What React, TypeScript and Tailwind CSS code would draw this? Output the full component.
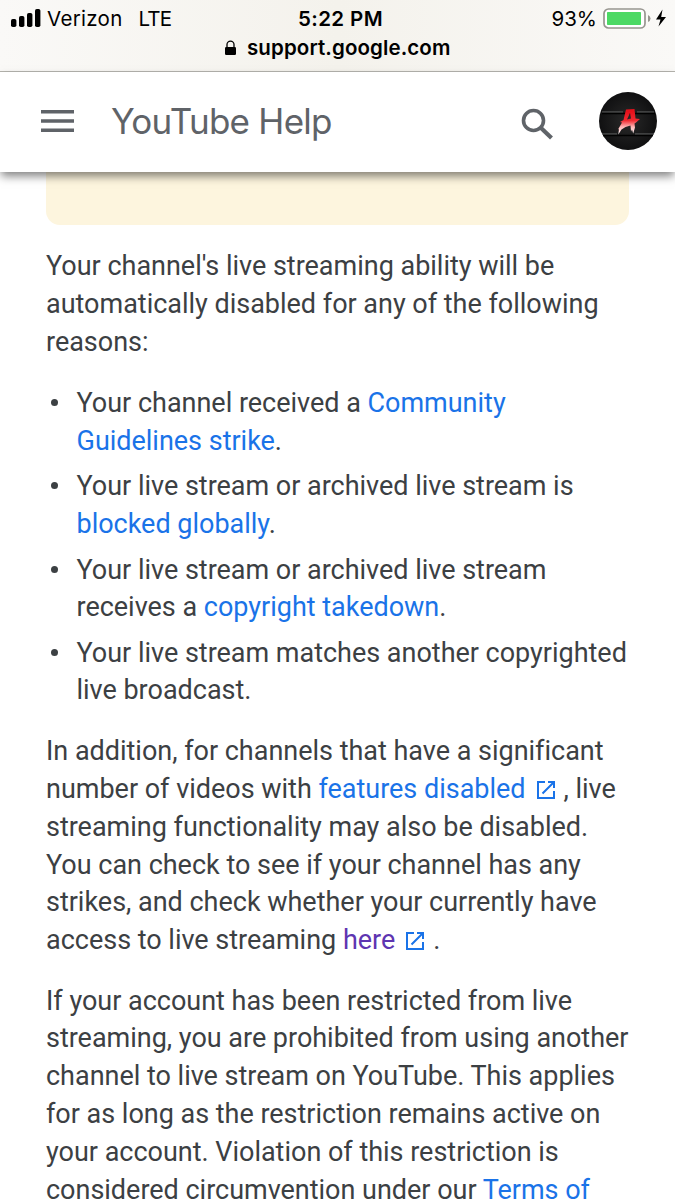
import type { ReactNode } from "react";

const reasons = [
  <>
    Your channel received a <Link>Community<br />Guidelines strike</Link>.
  </>,
  <>
    Your live stream or archived live stream is<br />
    <Link>blocked globally</Link>.
  </>,
  <>
    Your live stream or archived live stream<br />
    receives a <Link>copyright takedown</Link>.
  </>,
  <>
    Your live stream matches another copyrighted<br />
    live broadcast.
  </>,
];

function Link({ children, visited = false }: { children: ReactNode; visited?: boolean }) {
  return (
    <a href="#" className={visited ? "text-[#5e35b1]" : "text-[#1a73e8]"}>
      {children}
    </a>
  );
}

function ExternalIcon() {
  return (
    <svg
      width="18"
      height="18"
      viewBox="0 0 18 18"
      fill="none"
      stroke="#1a73e8"
      strokeWidth="2"
      className="inline-block align-[-1px] ml-[11px] mr-[9px]"
    >
      <path d="M8 1H1v16h16v-7" />
      <path d="M11 1h6v6M17 1L5.5 12.5" />
    </svg>
  );
}

function StatusBar() {
  return (
    <div className="h-[72px] border-b border-[#b5b4ae] bg-linear-to-r from-[#faf9f7] via-[#f4f2ec] to-[#faf9f7] text-black">
      <div className="grid grid-cols-3 h-[38px] items-center text-[20.5px] leading-none">
        <div className="flex items-center pl-[11px]">
          <svg width="30" height="18" viewBox="0 0 30 18" className="-mt-[2px]">
            <rect x="0" y="10" width="5.4" height="8" rx="1.8" />
            <rect x="8" y="7" width="5.4" height="11" rx="1.8" />
            <rect x="16" y="4" width="5.4" height="14" rx="1.8" />
            <rect x="24" y="0" width="5.4" height="18" rx="1.8" />
          </svg>
          <span className="ml-[6px] tracking-[0.3px]">Verizon</span>
          <span className="ml-[16px] tracking-[-0.9px]">LTE</span>
        </div>
        <span className="text-center pl-[6px] font-semibold tracking-[0.4px]">5:22 PM</span>
        <div className="flex items-center justify-end pr-[8px]">
          <span>93%</span>
          <svg width="64" height="22" viewBox="0 0 64 22" className="ml-[6px] -mt-px">
            <rect x="1" y="1" width="41" height="19" rx="4.5" fill="#fff" stroke="#97958f" strokeWidth="1.7" />
            <rect x="4" y="4" width="34" height="13" rx="0.8" fill="#4cd964" />
            <path d="M45 7q2.500 1 2.500 3.500T45 14z" fill="#97958f" />
            <path d="M59.500 1.500L53 11.500h4.500L55.500 18.500 63 9h-4.800z" />
          </svg>
        </div>
      </div>
      <div className="flex items-center -mt-px pl-[224px] text-[20.5px] leading-[22px] font-semibold tracking-[0.1px]">
        <svg width="13" height="16" viewBox="0 0 13 16" className="mr-[10px]">
          <rect x="1" y="7" width="11" height="8" rx="1.2" />
          <path d="M3 8V4.6a3.5 3.5 0 017 0V8" fill="none" stroke="#000" strokeWidth="1.3" />
        </svg>
        support.google.com
      </div>
    </div>
  );
}

function Avatar() {
  return (
    <svg width="58" height="58" viewBox="0 0 58 58" className="-mt-[2px]">
      <defs>
        <radialGradient id="disc">
          <stop offset="0" stopColor="#292929" />
          <stop offset="1" stopColor="#101011" />
        </radialGradient>
        <linearGradient id="letter" x1="0" y1="0" x2="0" y2="1">
          <stop offset="0.1" stopColor="#e5111b" />
          <stop offset="0.45" stopColor="#f02a31" />
          <stop offset="0.7" stopColor="#ffb5b5" />
          <stop offset="1" stopColor="#fff" />
        </linearGradient>
      </defs>
      <circle cx="29" cy="29" r="29" fill="url(#disc)" />
      <path d="M3 20h21M38 20h17M3 42h15M36 42h19" stroke="#666969" strokeWidth="1" />
      <path d="M3 21.500h53M4 43.500h50" stroke="#000" strokeWidth="1.5" />
      {/* Brush-style emblem */}
      <path
        d="M27 17.500l8.500-.5 1 9.500 4.500.5-4 3.500-1.500 1 .5 4-1.800 6-1.200-4-1 2-.5-6-5 1.500-4 2.500-3.200 5 .7-5.500-1 .5 4-7-2-.5 3.500-2zM31 21l-3 6.500 4-1z"
        fill="url(#letter)"
        fillRule="evenodd"
      />
    </svg>
  );
}

function Header() {
  return (
    <header className="relative z-10 flex items-center h-[100px] bg-white pl-[41px] pr-[18px] shadow-[0_5px_9px_-1px_rgba(0,0,0,0.5)]">
      <svg width="33" height="22" viewBox="0 0 33 22" fill="#5f6368" className="-mt-[2px]">
        <path d="M0 0h33v3.500H0zM0 9.200h33v3.500H0zM0 18.400h33v3.500H0z" />
      </svg>
      <h1 className="ml-[37px] -mt-px text-[35px] leading-none text-[#5f6368] font-[Inter,sans-serif] tracking-[-0.75px] font-normal">
        YouTube Help
      </h1>
      <svg
        width="33"
        height="33"
        viewBox="0 0 33 33"
        fill="none"
        stroke="#5f6368"
        className="ml-auto mr-[45px] mt-[5px]"
      >
        <circle cx="12.500" cy="12.500" r="10" strokeWidth="3.600" />
        <path d="M19 19l11.500 11" strokeWidth="4.200" />
      </svg>
      <Avatar />
    </header>
  );
}

export default function App() {
  return (
    <div className="w-[675px] h-[1200px] overflow-hidden bg-white font-[Inter,sans-serif]">
      <StatusBar />
      <Header />
      <main className="px-[46px] font-[Roboto,sans-serif] text-[27px] leading-[37.8px] tracking-[-0.015px] text-[#3c4043] whitespace-nowrap">
        <div className="h-[53px] rounded-b-[14px] bg-[#fdf5de]" />
        <p className="mt-[23px]">
          Your channel's live streaming ability will be<br />
          automatically disabled for any of the following<br />
          reasons:
        </p>
        <ul className="mt-[24px] flex flex-col gap-[7.500px]">
          {reasons.map((reason, i) => (
            <li key={i} className="flex">
              <span className="w-[7px] h-[7px] mt-[14px] ml-[5px] mr-[18.500px] shrink-0 rounded-full bg-[#3c4043]" />
              <span>{reason}</span>
            </li>
          ))}
        </ul>
        <p className="mt-[23px]">
          In addition, for channels that have a significant<br />
          number of videos with <Link>features disabled</Link>
          <ExternalIcon />, live<br />
          streaming functionality may also be disabled.<br />
          You can check to see if your channel has any<br />
          strikes, and check whether your currently have<br />
          access to live streaming <Link visited>here</Link>
          <ExternalIcon />.
        </p>
        <p className="mt-[22.5px]">
          If your account has been restricted from live<br />
          streaming, you are prohibited from using another<br />
          channel to live stream on YouTube. This applies<br />
          for as long as the restriction remains active on<br />
          your account. Violation of this restriction is<br />
          considered circumvention under our <Link>Terms of</Link>
        </p>
      </main>
    </div>
  );
}
